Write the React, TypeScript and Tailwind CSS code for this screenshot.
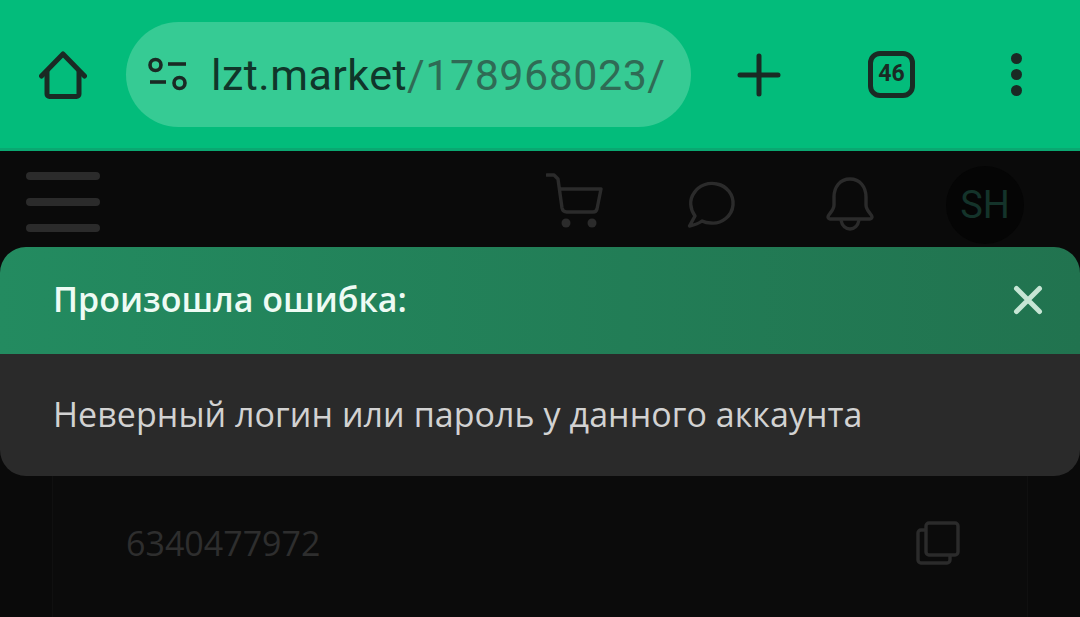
export default function App() {
  const ico = "#1a2a24";
  const dim = "#2b2b2b";
  return (
    <div className="relative w-[1080px] h-[617px] overflow-hidden bg-[#0a0a0a] flex flex-col">
      <header className="h-[151px] shrink-0 bg-[#03bc7b] border-b-[3px] border-[#0aa871] flex items-center pl-[39px] pt-[1px]">
        <svg width="48" height="48" viewBox="0 0 48 48" fill="none" className="shrink-0">
          <path d="M2.5 25 L24 3 L45.5 25" stroke={ico} strokeWidth="5" strokeLinecap="round" strokeLinejoin="round" />
          <path d="M8 21 V43 a2.5 2.5 0 0 0 2.5 2.5 H37.5 a2.5 2.5 0 0 0 2.5 -2.5 V21" stroke={ico} strokeWidth="5" strokeLinecap="round" strokeLinejoin="round" />
        </svg>
        <div className="ml-[39px] w-[565px] h-[105px] rounded-[53px] bg-[#36cb94] flex items-center pl-[22px] shrink-0">
          <svg width="40" height="36" viewBox="0 0 40 36" fill="none" className="shrink-0">
            <circle cx="7.5" cy="8" r="5.5" stroke={ico} strokeWidth="3.6" />
            <path d="M20 7 H38" stroke={ico} strokeWidth="3.6" />
            <path d="M2 25 H18" stroke={ico} strokeWidth="3.6" />
            <circle cx="31.5" cy="26" r="5.5" stroke={ico} strokeWidth="3.6" />
          </svg>
          <div className="ml-[23px] pt-[2px] font-['Roboto',sans-serif] text-[43px] leading-none tracking-[0.5px] whitespace-nowrap">
            <span className="text-[#10362a]">lzt.market</span>
            <span className="text-[#2f6b55]">/178968023/</span>
          </div>
        </div>
        <svg width="44" height="44" viewBox="0 0 44 44" fill="none" className="ml-[46px] shrink-0">
          <path d="M22 3 V41 M3 22 H41" stroke={ico} strokeWidth="5" strokeLinecap="round" />
        </svg>
        <div className="ml-[87px] w-[47px] h-[47px] rounded-[12px] border-[5px] border-[#1a2a24] flex items-center justify-center font-['Roboto',sans-serif] font-bold text-[23px] text-[#1a2a24] shrink-0">
          46
        </div>
        <div className="ml-[96px] flex flex-col gap-[5px] shrink-0">
          <span className="w-[11px] h-[11px] rounded-full bg-[#1a2a24]" />
          <span className="w-[11px] h-[11px] rounded-full bg-[#1a2a24]" />
          <span className="w-[11px] h-[11px] rounded-full bg-[#1a2a24]" />
        </div>
      </header>

      <nav className="h-[96px] shrink-0 flex items-start">
        <div className="ml-[26px] mt-[21px] flex flex-col gap-[18px]">
          <span className="block w-[74px] h-[8px] rounded-[4px] bg-[#2b2b2b]" />
          <span className="block w-[74px] h-[8px] rounded-[4px] bg-[#2b2b2b]" />
          <span className="block w-[74px] h-[8px] rounded-[4px] bg-[#2b2b2b]" />
        </div>
        <svg width="58" height="58" viewBox="0 0 58 58" fill="none" className="ml-[446px] mt-[22px] shrink-0">
          <path d="M1 2 H8 L12 6 L16 35 a5 5 0 0 0 5 4 H47 a4 4 0 0 0 4 -3 L55 16 H15" stroke={dim} strokeWidth="3.4" strokeLinecap="round" strokeLinejoin="round" />
          <circle cx="20" cy="50" r="4.5" fill={dim} />
          <circle cx="46" cy="50" r="4.5" fill={dim} />
        </svg>
        <svg width="50" height="50" viewBox="0 0 50 50" fill="none" className="ml-[83px] mt-[29px] shrink-0">
          <path d="M2.5 46 L8 36 C3 29 2 20 7 13 C12 5 22 2 30 4 C40 6 47 15 46 25 C45 36 35 44 24 43 C20 43 17 42 15 41 C11 44 7 45 2.5 46 Z" stroke={dim} strokeWidth="3.4" strokeLinejoin="round" />
        </svg>
        <svg width="50" height="54" viewBox="0 0 50 54" fill="none" className="ml-[88px] mt-[26px] shrink-0">
          <path d="M3 40 C3 37 9 34 9 28 V20 C9 10 15 2 25 2 C35 2 41 10 41 20 V28 C41 34 47 37 47 40 C47 41 46 42 45 42 H5 C4 42 3 41 3 40 Z" stroke={dim} strokeWidth="3.4" strokeLinejoin="round" />
          <path d="M16 43 C17 49 21 52 25 52 C29 52 33 49 34 43" stroke={dim} strokeWidth="3.4" />
        </svg>
        <div className="ml-[71px] mt-[15px] w-[78px] h-[78px] rounded-full bg-[#050505] flex items-center justify-center font-['Roboto',sans-serif] text-[38px] text-[#14332a] shrink-0">
          SH
        </div>
      </nav>

      <main className="flex-1 px-[52px]">
        <div className="h-full border-x border-[#101010] bg-[#0b0b0b] pt-[274px] pl-[73px] pr-[67px] flex items-start justify-between">
          <span className="font-['Open_Sans',sans-serif] text-[34px] leading-[44px] text-[#2e2e2e]">6340477972</span>
          <svg width="44" height="44" viewBox="0 0 44 44" fill="none" className="shrink-0">
            <rect x="10" y="2" width="32" height="32" rx="3" stroke={dim} strokeWidth="3.4" />
            <path d="M10 9 H5 a3 3 0 0 0 -3 3 V39 a3 3 0 0 0 3 3 H31 a3 3 0 0 0 3 -3 V34" stroke={dim} strokeWidth="3.4" />
          </svg>
        </div>
      </main>

      <div className="absolute left-0 top-[247px] w-[1080px] rounded-[26px] overflow-hidden">
        <div className="h-[107px] bg-gradient-to-r from-[#238b60] to-[#21734f] flex items-center justify-between pl-[53px] pr-[36px]">
          <span className="font-['Open_Sans',sans-serif] font-semibold text-[34px] text-[#eefbf4] leading-none pb-[4px]">Произошла ошибка:</span>
          <svg width="32" height="32" viewBox="0 0 32 32" fill="none" className="-translate-y-[1px]">
            <path d="M4.5 4.5 L27.5 27.5 M27.5 4.5 L4.5 27.5" stroke="#c6e5d4" strokeWidth="5" strokeLinecap="round" />
          </svg>
        </div>
        <div className="h-[122px] bg-[#2a2a2a] pl-[53px] flex items-center">
          <span className="font-['Open_Sans',sans-serif] text-[34px] tracking-[0.05px] text-[#d2d2d2] leading-none pb-[2px]">Неверный логин или пароль у данного аккаунта</span>
        </div>
      </div>
    </div>
  );
}
